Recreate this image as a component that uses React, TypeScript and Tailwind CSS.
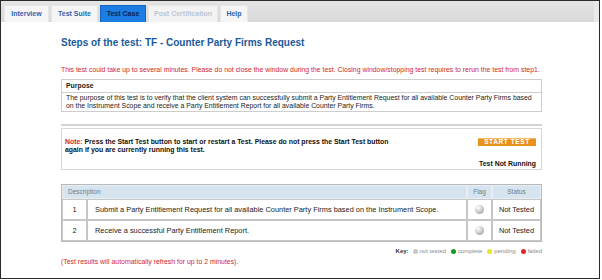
import React from 'react';

const tabs = [
  { label: 'Interview', w: 'w-[45px]', state: 'normal' },
  { label: 'Test Suite', w: 'w-[47px]', state: 'normal' },
  { label: 'Test Case', w: 'w-[46px]', state: 'active' },
  { label: 'Post Certification', w: 'w-[70px]', state: 'disabled' },
  { label: 'Help', w: 'w-[28px]', state: 'normal' },
];

const steps = [
  { n: 1, text: 'Submit a Party Entitlement Request for all available Counter Party Firms based on the Instrument Scope.', status: 'Not Tested' },
  { n: 2, text: 'Receive a successful Party Entitlement Report.', status: 'Not Tested' },
];

const FlagBall = () => (
  <span className="inline-block w-[9px] h-[9px] rounded-full bg-[radial-gradient(circle_at_35%_30%,#ffffff_0%,#cfcfcf_45%,#8d8d8d_100%)]" />
);

const App: React.FC = () => {
  return (
    <div className="w-[602px] h-[280px] bg-white overflow-hidden font-['Liberation_Sans',Arial,sans-serif]">
      <div className="w-[600px] h-[279px] border border-[#2b2b2b] flex flex-col">
        {/* tab bar */}
        <div className="h-[21px] flex items-end gap-[2px] pl-[3px] bg-gradient-to-b from-[#e4e4e4] to-[#d9d9d9] border-r-[5px] border-[#e9e9e9]">
          {tabs.map((t) => (
            <div
              key={t.label}
              className={`${t.w} h-[17px] flex items-center justify-center text-[7px] font-bold border-t border-x ${
                t.state === 'active'
                  ? 'bg-[#1b7de4] border-[#1466c0] text-[#0b2452]'
                  : t.state === 'disabled'
                  ? 'bg-[#f3f3f3] border-[#e6e6e6] text-[#b9c6d6]'
                  : 'bg-[#f5f5f5] border-[#e6e6e6] text-[#2f64ad]'
              }`}
            >
              {t.label}
            </div>
          ))}
        </div>

        <div className="pl-[60px] w-[541px] flex flex-col">
          <h1 className="mt-[15px] text-[10px] leading-[12px] font-bold text-[#1c5a98]">
            Steps of the test: TF - Counter Party Firms Request
          </h1>

          <p className="mt-[17px] text-[6.9px] leading-[8px] text-[#d21f2b] whitespace-nowrap">
            This test could take up to several minutes. Please do not close the window during the test. Closing window/stopping test requires to rerun the test from step1.
          </p>

          {/* purpose */}
          <div className="mt-[5px] border border-[#cdcdcd]">
            <div className="h-[13px] pl-[4px] flex items-center text-[6.9px] font-bold text-[#222] border-b border-[#cdcdcd]">
              Purpose
            </div>
            <p className="pl-[4px] pr-[8px] pt-[1px] pb-[1px] text-[6.9px] leading-[8px] text-[#222]">
              The purpose of this test is to verify that the client system can successfully submit a Party Entitlement Request for all available Counter Party Firms based on the Instrument Scope and receive a Party Entitlement Report for all available Counter Party Firms.
            </p>
          </div>

          <div className="mt-[12px] h-[2px] bg-[#d4d4d4]" />

          {/* note / start */}
          <div className="mt-[2px] h-[42px] border border-[#d6d6d6] flex justify-between pl-[3px] pr-[5px] pt-[9px]">
            <p className="w-[330px] text-[6.9px] leading-[8px] font-bold text-[#111]">
              <span className="text-[#d21f2b]">Note:</span> Press the Start Test button to start or restart a Test. Please do not press the Start Test button again if you are currently running this test.
            </p>
            <div className="flex flex-col items-end">
              <button className="w-[58px] h-[9px] bg-[#e8931d] text-white text-[6.5px] font-bold tracking-[0.6px] leading-none border-t border-[#f3b868]">
                START TEST
              </button>
              <span className="mt-[13px] text-[6.9px] font-bold text-[#111]">Test Not Running</span>
            </div>
          </div>

          {/* steps table */}
          <table className="mt-[14px] w-[481px] border-separate border-spacing-0 border border-[#b9b9b9] text-[#222]">
            <thead>
              <tr className="h-[14px] bg-[#d5e4ef] text-[6.5px] text-[#6f7b86]">
                <th colSpan={2} className="text-left font-normal pl-[5px] border border-[#e6eef4]">Description</th>
                <th className="w-[25px] font-normal border border-[#e6eef4]">Flag</th>
                <th className="w-[49px] font-normal border border-[#e6eef4]">Status</th>
              </tr>
            </thead>
            <tbody>
              {steps.map((s) => (
                <tr key={s.n} className="h-[21px] text-[7.4px]">
                  <td className="w-[25px] text-center border border-[#c6c6c6]">{s.n}</td>
                  <td className="pl-[7px] border border-[#c6c6c6]">{s.text}</td>
                  <td className="text-center border border-[#c6c6c6]">
                    <div className="flex justify-center"><FlagBall /></div>
                  </td>
                  <td className="text-center border border-[#c6c6c6]">{s.status}</td>
                </tr>
              ))}
            </tbody>
          </table>

          {/* key */}
          <div className="mt-[5px] flex justify-end items-center gap-[2px] text-[6px] leading-[8px] text-[#8a8a8a]">
            <span className="font-bold text-[#333] mr-[2px]">Key:</span>
            <span className="w-[5px] h-[5px] rounded-full bg-[#c9c9c9]" />
            <span className="mr-[3px]">not tested</span>
            <span className="w-[5px] h-[5px] rounded-full bg-[#179a1f]" />
            <span className="mr-[3px]">complete</span>
            <span className="w-[5px] h-[5px] rounded-full bg-[#eee52a]" />
            <span className="mr-[3px]">pending</span>
            <span className="w-[5px] h-[5px] rounded-full bg-[#e3262b]" />
            <span>failed</span>
          </div>

          <p className="mt-[3px] text-[6.9px] leading-[8px] text-[#d21f2b]">
            (Test results will automatically refresh for up to 2 minutes).
          </p>
        </div>
      </div>
    </div>
  );
};

export default App;
